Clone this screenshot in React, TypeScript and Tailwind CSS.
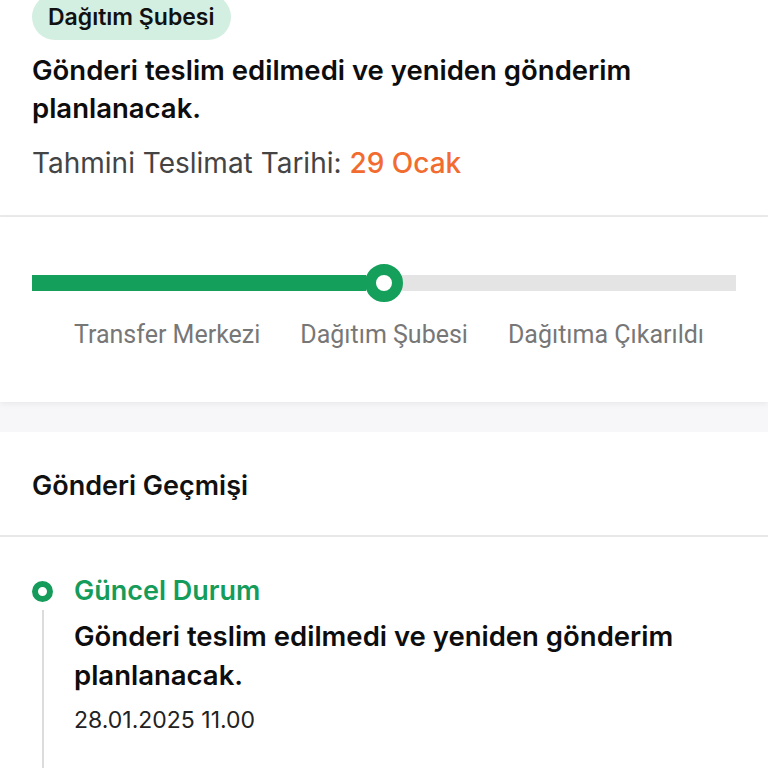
import React from "react";

export default function App() {
  return (
    <div className="w-full bg-white" style={{ fontFamily: "Inter, 'Noto Sans', sans-serif" }}>
      {/* Top summary */}
      <div className="px-8 pb-[34px] border-b-2 border-[#ebebeb] -mt-[6px]">
        <div className="inline-flex items-center h-[46px] px-4 rounded-full bg-[#d3efe2] text-[23px] font-semibold text-[#111]">
          Dağıtım Şubesi
        </div>
        <div className="mt-[11px] text-[27.5px] leading-[38px] font-semibold text-[#0d0d0d]">
          Gönderi teslim edilmedi ve yeniden gönderim planlanacak.
        </div>
        <div className="mt-[18px] text-[28px] leading-[36px] text-[#444]">
          Tahmini Teslimat Tarihi: <span className="font-medium text-[#f26b2f]">29 Ocak</span>
        </div>
      </div>

      {/* Progress */}
      <div className="pt-[47px] pb-[52px] shadow-[0_2px_6px_rgba(0,0,0,0.06)] relative">
        <div className="px-8 flex items-center h-[38px]">
          <div className="h-4 w-[334px] bg-[#14a05a]" />
          <div className="w-[38px] h-[38px] rounded-full border-[11px] border-[#14a05a] bg-white -mx-[1px] relative" />
          <div className="h-4 flex-1 bg-[#e4e4e4]" />
        </div>
        <div
          className="mt-[18px] pl-[10px] flex justify-center gap-10 text-[25px] leading-[30px] text-[#777]"
          style={{ fontFamily: "Roboto, 'Noto Sans', sans-serif" }}
        >
          <span>Transfer Merkezi</span>
          <span>Dağıtım Şubesi</span>
          <span>Dağıtıma Çıkarıldı</span>
        </div>
      </div>

      {/* Gray band */}
      <div className="h-[30px] bg-[#f7f7f9]" />

      {/* History */}
      <div className="px-8 pt-[40px] pb-[35px] border-b-2 border-[#e8e8e8] text-[27px] leading-[28px] font-semibold text-[#111]">
        Gönderi Geçmişi
      </div>

      <div className="px-8 pt-[45px] flex">
        <div className="w-[21px] flex flex-col items-center">
          <div className="w-[21px] h-[21px] rounded-full border-[6px] border-[#169c5a] bg-white mt-[-1px]" />
          <div className="w-[2px] h-[158px] bg-[#dcdcdc] mt-[8px]" />
        </div>
        <div className="ml-[21px] -mt-[9px]">
          <div className="text-[27px] leading-[36px] font-semibold text-[#169c5a]">Güncel Durum</div>
          <div className="mt-[8px] text-[27.5px] leading-[39px] font-semibold text-[#0d0d0d]">
            Gönderi teslim edilmedi ve yeniden gönderim planlanacak.
          </div>
          <div className="mt-[10px] text-[23px] leading-[30px] text-[#222]">28.01.2025 11.00</div>
        </div>
      </div>
    </div>
  );
}
